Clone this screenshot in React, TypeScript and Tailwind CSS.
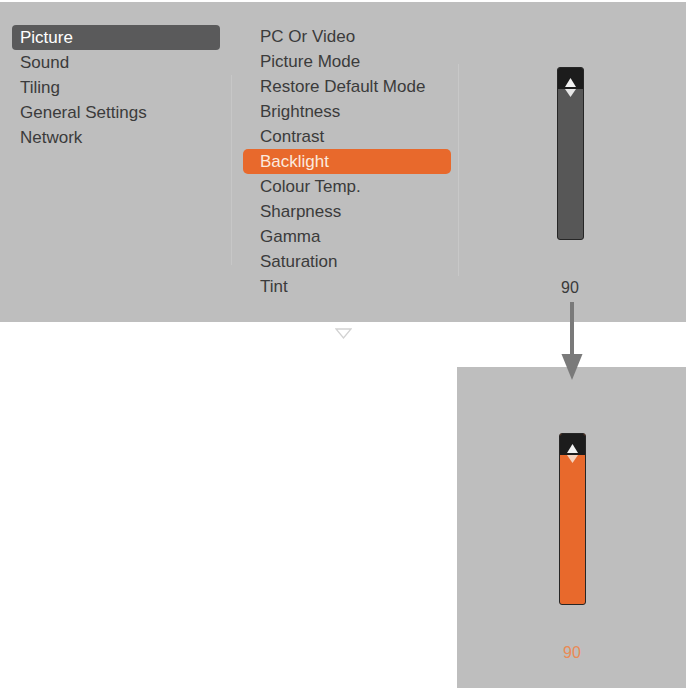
import React from 'react'

const leftItems = ['Picture', 'Sound', 'Tiling', 'General Settings', 'Network']
const midItems = [
  'PC Or Video',
  'Picture Mode',
  'Restore Default Mode',
  'Brightness',
  'Contrast',
  'Backlight',
  'Colour Temp.',
  'Sharpness',
  'Gamma',
  'Saturation',
  'Tint',
]

function Slider({ active }: { active?: boolean }) {
  return (
    <div
      className={
        'flex w-[27px] flex-col overflow-hidden rounded-[3px] border border-[#262626] ' +
        (active ? 'h-[172px] bg-[#e8692c]' : 'h-[173px] bg-[#575757]')
      }
    >
      <div className="flex h-[21px] shrink-0 items-end justify-center bg-[#1c1c1c] pb-[2px]">
        <svg width="11" height="9" viewBox="0 0 11 9">
          <path d="M5.5 0 L11 9 L0 9 Z" fill="#f2f2f2" />
        </svg>
      </div>
      <div className="flex justify-center">
        <svg width="11" height="8" viewBox="0 0 11 8">
          <path d="M0 0 L11 0 L5.5 8 Z" fill={active ? '#f6d2bd' : '#e6e6e6'} />
        </svg>
      </div>
    </div>
  )
}

export default function App() {
  return (
    <div
      className="relative h-[690px] w-[686px] overflow-hidden bg-white text-[17px] text-[#3b3b3b]"
      style={{ fontFamily: '"Liberation Sans", Arial, sans-serif' }}
    >
      <div className="h-[2px]" />
      {/* main menu panel */}
      <div className="flex h-[320px] bg-[#bebebe]">
        <div className="w-[12px] shrink-0" />
        <div className="w-[208px] shrink-0 pt-[23px]">
          {leftItems.map((t, i) => (
            <div
              key={t}
              className={
                'flex h-[25px] items-center rounded-[4px] pl-[8px] ' +
                (i === 0 ? 'bg-[#5a5a5b] text-white' : '')
              }
            >
              {t}
            </div>
          ))}
        </div>
        <div className="flex w-[23px] shrink-0 justify-center pt-[73px]">
          <div className="h-[190px] w-px bg-[#c7c7c7]" />
        </div>
        <div className="w-[208px] shrink-0 pt-[22px]">
          {midItems.map((t) => (
            <div
              key={t}
              className={
                'flex h-[25px] items-center rounded-[5px] pl-[17px] ' +
                (t === 'Backlight' ? 'bg-[#e8692c] text-[#fbe9df]' : '')
              }
            >
              {t}
            </div>
          ))}
        </div>
        <div className="flex w-[8px] shrink-0 justify-end pt-[62px]">
          <div className="h-[212px] w-px bg-[#c8c8c8]" />
        </div>
        <div className="flex w-[222px] flex-col items-center pt-[65px]">
          <Slider />
          <div className="mt-[36px] text-[16px] text-[#3a3a3a]">90</div>
        </div>
      </div>

      <div className="flex">
        <div className="flex w-[457px] justify-center pl-[230px] pt-[6px]">
          <svg width="17" height="11" viewBox="0 0 17 11">
            <path d="M1 1 L16 1 L8.5 10 Z" fill="none" stroke="#d2d2d2" strokeWidth="1.3" />
          </svg>
        </div>
        <div className="mt-[45px] flex h-[321px] w-[229px] flex-col items-center bg-[#bebebe] pl-[1px] pt-[66px]">
          <Slider active />
          <div className="mt-[36px] text-[16px] text-[#ea8a55]">90</div>
        </div>
      </div>

      {/* arrow linking the two sliders */}
      <svg className="absolute left-[560px] top-[302px]" width="24" height="80" viewBox="0 0 24 80">
        <rect x="10" y="0" width="4" height="56" fill="#7a7a7a" />
        <path d="M1.5 52 L22.5 52 L12 78 Z" fill="#7a7a7a" />
      </svg>
    </div>
  )
}
